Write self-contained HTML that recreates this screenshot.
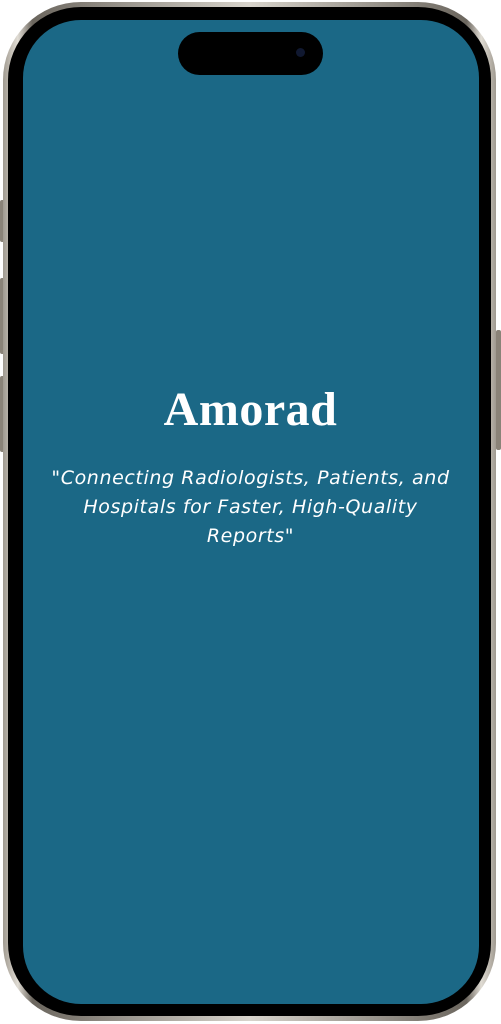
<!DOCTYPE html>
<html><head><style>
html,body{margin:0;padding:0;background:#fff;width:501px;height:1024px;overflow:hidden;position:relative}
.btn{position:absolute;background:#8a8378;border-radius:2px}
.frame{position:absolute;left:3px;top:2px;width:493px;height:1019px;border-radius:78px;background:linear-gradient(90deg,#a09a90,#e0dcd4 3%,#6b665e 6%,#d8d4cc 50%,#6b665e 94%,#e0dcd4 97%,#a09a90);}
.bezel{position:absolute;left:8px;top:7px;width:483px;height:1009px;border-radius:73px;background:#000}
.screen{position:absolute;left:23px;top:20px;width:456px;height:984px;border-radius:58px;background:#1b6886}
.island{position:absolute;left:178px;top:32px;width:145px;height:43px;border-radius:22px;background:#000}
.cam{position:absolute;left:296px;top:48px;width:9px;height:9px;border-radius:50%;background:#101830}
h1{position:absolute;left:0;width:501px;top:382px;margin:0;text-align:center;color:#fff;font:bold 48px "Liberation Serif",serif;letter-spacing:0.5px}
p{position:absolute;left:0;width:501px;top:464px;margin:0;text-align:center;color:#fff;font:oblique 19px/29px "DejaVu Sans",sans-serif;letter-spacing:0.6px;white-space:nowrap}
</style></head><body>
<div class="btn" style="left:0;top:200px;width:5px;height:42px"></div>
<div class="btn" style="left:0;top:278px;width:5px;height:76px"></div>
<div class="btn" style="left:0;top:376px;width:5px;height:76px"></div>
<div class="btn" style="left:496px;top:330px;width:5px;height:120px"></div>
<div class="frame"></div>
<div class="bezel"></div>
<div class="screen"></div>
<div class="island"></div>
<div class="cam"></div>
<h1>Amorad</h1>
<p>"Connecting Radiologists, Patients, and<br>Hospitals for Faster, High-Quality<br>Reports"</p>
</body></html>
